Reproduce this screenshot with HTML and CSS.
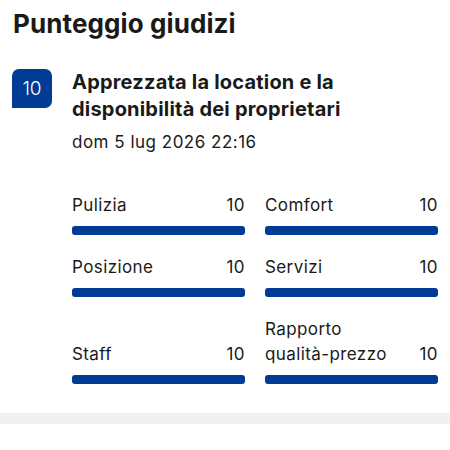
FILE: index.html
```html
<!DOCTYPE html>
<html>
<head>
  <title>Punteggio giudizi</title>
  <meta name="viewport" content="width=device-width, initial-scale=1.0" />
  <link rel="stylesheet" href="styles.css">
</head>
<body>
<div class="section">
  <h1>Punteggio giudizi</h1>
  <div class="review">
    <div class="badge">10</div>
    <div class="review-body">
      <h2>Apprezzata la location e la disponibilità dei proprietari</h2>
      <div class="date">dom 5 lug 2026 22:16</div>
      <div class="scores">
        <div class="score">
          <div class="score-head"><span class="label">Pulizia</span><span class="num">10</span></div>
          <div class="bar"></div>
        </div>
        <div class="score">
          <div class="score-head"><span class="label">Comfort</span><span class="num">10</span></div>
          <div class="bar"></div>
        </div>
        <div class="score">
          <div class="score-head"><span class="label">Posizione</span><span class="num">10</span></div>
          <div class="bar"></div>
        </div>
        <div class="score">
          <div class="score-head"><span class="label">Servizi</span><span class="num">10</span></div>
          <div class="bar"></div>
        </div>
        <div class="score">
          <div class="score-head"><span class="label">Staff</span><span class="num">10</span></div>
          <div class="bar"></div>
        </div>
        <div class="score">
          <div class="score-head"><span class="label">Rapporto <span class="nowrap">qualità-prezzo</span></span><span class="num">10</span></div>
          <div class="bar"></div>
        </div>
      </div>
    </div>
  </div>
</div>
<div class="divider"></div>
</body>
</html>
```

FILE: styles.css
```css
body {
  font-family: 'Inter', 'Liberation Sans', sans-serif;
  background: #fff;
  color: #1a1a1a;
  margin: 0;
  padding: 0;
}
.section {
  padding: 8px 12px 29px 12px;
}
h1 {
  font-size: 26px;
  line-height: 32px;
  font-weight: 700;
  margin: 0 0 29px 1px;
  letter-spacing: 0.1px;
}
.review {
  display: flex;
  gap: 20px;
}
.badge {
  flex: none;
  width: 40px;
  height: 39px;
  background: #003b95;
  color: #fff;
  border-radius: 7px 7px 7px 0;
  display: flex;
  justify-content: center;
  align-items: center;
  font-size: 19px;
  font-weight: 300;
}
.review-body {
  flex: 1;
}
h2 {
  font-size: 20px;
  line-height: 27px;
  font-weight: 700;
  margin: 0;
  letter-spacing: 0.2px;
}
.date {
  font-size: 17px;
  line-height: 24px;
  margin-top: 7px;
  letter-spacing: 0.5px;
}
.scores {
  display: grid;
  grid-template-columns: 1fr 1fr;
  column-gap: 20px;
  row-gap: 20px;
  margin-top: 39px;
}
.score {
  display: flex;
  flex-direction: column;
  justify-content: flex-end;
}
.score-head {
  display: flex;
  justify-content: space-between;
  align-items: flex-end;
  gap: 10px;
  font-size: 17px;
  line-height: 25px;
  letter-spacing: 0.4px;
}
.nowrap {
  white-space: nowrap;
}
.bar {
  height: 9px;
  margin-top: 8px;
  background: #003b95;
  border-radius: 3px;
}
.divider {
  height: 11px;
  background: #f0f0f0;
}
```
